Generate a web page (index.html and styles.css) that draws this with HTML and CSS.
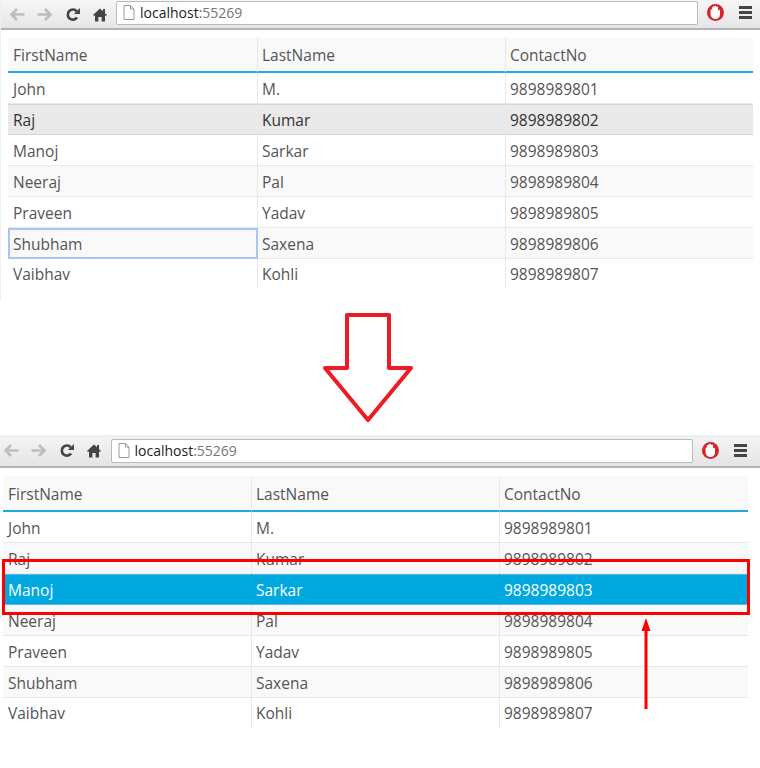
FILE: index.html
```html
<html>
  <head>
    <meta charset="utf-8" />
    <meta name="viewport" content="width=device-width, initial-scale=1.0" />
    <title>Row selection</title>
    <link rel="stylesheet" href="styles.css">
  </head>
  <body>
    <svg class="sprite" width="0" height="0">
      <symbol id="i-back" viewBox="0 0 16 14">
        <path d="M8 1.5 2.5 7 8 12.5M2.5 7H15.5" fill="none" stroke="currentColor" stroke-width="2.6"/>
      </symbol>
      <symbol id="i-forward" viewBox="0 0 16 14">
        <path d="M8 1.5 13.5 7 8 12.5M13.5 7H.5" fill="none" stroke="currentColor" stroke-width="2.6"/>
      </symbol>
      <symbol id="i-reload" viewBox="0 0 16 16">
        <path d="M12.3 11.2A5.4 5.4 0 1 1 12 4.6" fill="none" stroke="currentColor" stroke-width="2.8"/>
        <path d="M9 7.4H15.4V1Z" fill="currentColor"/>
      </symbol>
      <symbol id="i-home" viewBox="0 0 14 14">
        <path d="M7 1 0 7.6 1 8.6 2 7.8V14H5.4V9.4H8.6V14H12V7.8L13 8.6 14 7.6 12 5.7V1.4H10V3.8Z" fill="currentColor"/>
      </symbol>
      <symbol id="i-page" viewBox="0 0 12 15">
        <path d="M1 .5H7.5L11 4V14.5H1ZM7.5 .5V4H11" fill="#fff" stroke="#999"/>
      </symbol>
      <symbol id="i-block" viewBox="0 0 17 17">
        <circle cx="8.5" cy="8.5" r="8.5" fill="#d8232a"/>
        <path d="M3.6 6C3.6 5 4.8 5 4.9 6V3.8C4.9 2.8 6.2 2.8 6.3 3.8V2.8C6.3 1.8 7.6 1.8 7.7 2.8V2.6C7.7 1.6 9.2 1.6 9.2 2.6V3.2C9.2 2.4 11 2.4 11 3.4V6.6C11.4 5.6 13 5.4 13 6.6V10.4C13 13.2 11 15 8.6 15 6.2 15 4.8 13.6 3.6 11.4Z" fill="#fff"/>
      </symbol>
    </svg>

    <div class="shot shot-first">
      <div class="toolbar">
        <svg class="nav nav-off"><use href="#i-back"/></svg>
        <svg class="nav nav-off"><use href="#i-forward"/></svg>
        <svg class="nav nav-on"><use href="#i-reload"/></svg>
        <svg class="nav nav-on nav-home"><use href="#i-home"/></svg>
        <div class="urlbar">
          <svg class="page-icon"><use href="#i-page"/></svg>
          <span class="host">localhost</span><span class="port">:55269</span>
        </div>
        <svg class="block-icon"><use href="#i-block"/></svg>
        <div class="menu"><i></i><i></i><i></i></div>
      </div>
      <table class="grid">
        <colgroup><col class="col-a"><col class="col-b"><col class="col-c"></colgroup>
        <thead>
          <tr><th>FirstName</th><th>LastName</th><th>ContactNo</th></tr>
        </thead>
        <tbody>
          <tr><td>John</td><td>M.</td><td>9898989801</td></tr>
          <tr class="hover"><td>Raj</td><td>Kumar</td><td>9898989802</td></tr>
          <tr><td>Manoj</td><td>Sarkar</td><td>9898989803</td></tr>
          <tr class="alt"><td>Neeraj</td><td>Pal</td><td>9898989804</td></tr>
          <tr><td>Praveen</td><td>Yadav</td><td>9898989805</td></tr>
          <tr class="alt"><td class="focused">Shubham</td><td>Saxena</td><td>9898989806</td></tr>
          <tr class="last"><td>Vaibhav</td><td>Kohli</td><td>9898989807</td></tr>
        </tbody>
      </table>
    </div>

    <div class="gap">
      <svg class="down-arrow" width="96" height="112" viewBox="0 0 96 112">
        <path d="M25 3H67V56H89L46 108 3 56H25Z" fill="#fff" stroke="#ed1c24" stroke-width="4" stroke-linejoin="round"/>
      </svg>
    </div>

    <div class="shot shot-second">
      <div class="toolbar">
        <svg class="nav nav-off"><use href="#i-back"/></svg>
        <svg class="nav nav-off"><use href="#i-forward"/></svg>
        <svg class="nav nav-on"><use href="#i-reload"/></svg>
        <svg class="nav nav-on nav-home"><use href="#i-home"/></svg>
        <div class="urlbar">
          <svg class="page-icon"><use href="#i-page"/></svg>
          <span class="host">localhost</span><span class="port">:55269</span>
        </div>
        <svg class="block-icon"><use href="#i-block"/></svg>
        <div class="menu"><i></i><i></i><i></i></div>
      </div>
      <table class="grid">
        <colgroup><col class="col-a"><col class="col-b"><col class="col-c"></colgroup>
        <thead>
          <tr><th>FirstName</th><th>LastName</th><th>ContactNo</th></tr>
        </thead>
        <tbody>
          <tr><td>John</td><td>M.</td><td>9898989801</td></tr>
          <tr class="alt"><td>Raj</td><td>Kumar</td><td>9898989802</td></tr>
          <tr class="selected"><td>Manoj</td><td>Sarkar</td><td>9898989803</td></tr>
          <tr class="alt"><td>Neeraj</td><td>Pal</td><td>9898989804</td></tr>
          <tr><td>Praveen</td><td>Yadav</td><td>9898989805</td></tr>
          <tr class="alt"><td>Shubham</td><td>Saxena</td><td>9898989806</td></tr>
          <tr class="last"><td>Vaibhav</td><td>Kohli</td><td>9898989807</td></tr>
        </tbody>
      </table>
      <div class="callout"></div>
      <svg class="up-arrow" width="10" height="92" viewBox="0 0 10 92">
        <path d="M5 0 9.5 13H6.5V91H3.5V13H.5Z" fill="#f00"/>
      </svg>
    </div>
  </body>
</html>
```

FILE: styles.css
```css
* {
  margin: 0;
  padding: 0;
  box-sizing: border-box;
}
body {
  background: #fff;
  font-family: "Open Sans", sans-serif;
  color: #555;
}
.sprite {
  position: absolute;
}
.shot {
  position: relative;
}
.shot-first {
  height: 300px;
  border-left: 1px solid #f0f0f0;
}
.toolbar {
  display: flex;
  align-items: center;
  height: 30px;
  padding-left: 7.5px;
  background: linear-gradient(#f6f6f6, #e6e6e6);
  border-bottom: 2px solid #b4b4b4;
}
.shot-second {
  height: 333px;
}
.shot-second .toolbar {
  height: 33px;
  padding-left: 3px;
  background: linear-gradient(#f0f0f0 0, #f2f2f2 20%, #e4e4e4);
}
.nav {
  width: 16px;
  height: 15px;
  margin-right: 12px;
  flex: none;
}
.nav-off {
  color: #bdbdbd;
}
.nav-on {
  color: #444;
}
.nav-home {
  width: 14px;
  margin-right: 9.5px;
}
.urlbar {
  display: flex;
  align-items: center;
  width: 582px;
  height: 24px;
  margin-top: -3px;
  padding-left: 6px;
  background: #fff;
  border: 1px solid #bbb;
  border-radius: 2px;
  font-size: 14px;
  flex: none;
}
.shot-second .urlbar {
  margin-top: 0;
}
.page-icon {
  width: 12px;
  height: 15px;
  margin-right: 5px;
}
.host {
  color: #222;
}
.port {
  color: #777;
}
.block-icon {
  width: 17px;
  height: 17px;
  margin-left: 9px;
  margin-top: -3px;
  flex: none;
}
.shot-second .block-icon {
  margin-top: 0;
}
.menu {
  display: flex;
  flex-direction: column;
  gap: 2px;
  width: 13px;
  margin-left: 15px;
  margin-top: -3px;
}
.shot-second .menu {
  margin-top: 0;
}
.menu i {
  display: block;
  height: 3px;
  background: #444;
}
.grid {
  width: 745px;
  margin: 7px 0 0 7px;
  table-layout: fixed;
  border-collapse: separate;
  border-spacing: 0;
  font-size: 15.5px;
}
.shot-second .grid {
  margin: 8px 0 0 3px;
}
.col-a {
  width: 250px;
}
.shot-second .col-a {
  width: 249px;
}
.col-b {
  width: 248px;
}
.grid th {
  height: 36px;
  padding: 2px 4px 0;
  background: #f9f9f9;
  border-right: 1px solid #e8e8e8;
  border-bottom: 2px solid #1fa9e0;
  font-weight: normal;
  text-align: left;
}
.grid td {
  height: 31px;
  padding: 2px 4px 0;
  border-right: 1px solid #e8e8e8;
  border-bottom: 1px solid #e8e8e8;
}
.grid th:first-child,
.grid td:first-child {
  padding-left: 5px;
}
.grid th:last-child,
.grid td:last-child {
  border-right: 0;
}
.alt td {
  background: #f9f9f9;
}
.grid .hover td {
  padding-top: 1px;
  background: #e9e9e9;
  color: #333;
  border-top: 1px solid #d4d4d4;
  border-bottom-color: #d4d4d4;
  border-right-color: #e9e9e9;
}
.grid .selected td {
  padding-top: 1px;
  background: #00a8e0;
  color: #fff;
  border-top: 1px solid #5fb8ea;
  border-bottom: 1px solid #5fb8ea;
  border-right-color: #00a8e0;
}
.grid td.focused {
  padding: 0 3px 0 3px;
  border: 2px solid #a9c5f7;
}
.last td {
  height: 29px;
  padding-top: 0;
  border-bottom: 0;
}
.gap {
  height: 135px;
  padding: 12px 0 0 322px;
}
.down-arrow {
  display: block;
}
.callout {
  position: absolute;
  left: 2px;
  top: 124px;
  width: 748px;
  height: 56px;
  border: 3px solid #f00;
}
.up-arrow {
  position: absolute;
  left: 641px;
  top: 183px;
}
```
